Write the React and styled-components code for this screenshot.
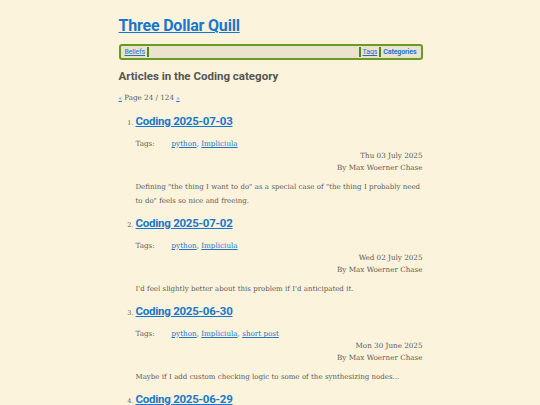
import styled, { createGlobalStyle } from 'styled-components';

const GlobalStyle = createGlobalStyle`
    html, body {
        margin: 0;
        padding: 0;
        background: #fcf3dc;
    }
    body {
        font-family: "DejaVu Serif", serif;
        color: #5a5a5a;
    }
`;

const Page = styled.div`
    width: 304px;
    margin: 0 auto;
    padding-top: 16px;
    padding-left: 1px;
`;

const SiteTitle = styled.h1`
    margin: 0;
    font-family: "Roboto", sans-serif;
    font-size: 16px;
    font-weight: 700;
    line-height: 20px;
    letter-spacing: -0.2px;

    a {
        color: #1a76cc;
    }
`;

const Nav = styled.nav`
    display: flex;
    align-items: center;
    margin-top: 8px;
    height: 12px;
    border: 2px solid #6a9a22;
    border-radius: 3px;
    background: #ebe3cf;
    padding: 0 2px;
    font-family: "Roboto", sans-serif;
    font-size: 7px;
    letter-spacing: -0.1px;
`;

const NavLink = styled.a`
    color: #1a76cc;
    font-weight: ${props => props.$current ? 700 : 400};
    text-decoration: ${props => props.$current ? 'none' : 'underline'};
    padding: 0 2px;
`;

const Sep = styled.span`
    width: 2px;
    height: 10px;
    background: #4e8a14;
`;

const Spacer = styled.div`
    flex: 1;
`;

const Heading = styled.h2`
    margin: 9px 0 0;
    font-family: "Roboto", sans-serif;
    font-size: 11.5px;
    font-weight: 700;
    color: #555;
    line-height: 14px;
`;

const Pager = styled.div`
    margin-top: 10px;
    font-size: 7.2px;
    line-height: 10px;
    color: #5a5a5a;

    a {
        color: #1a76cc;
        font-size: 5.5px;
    }
`;

const List = styled.ol`
    margin: 10px 0 0;
    padding-left: 17px;
    font-size: 6.5px;

    li::marker {
        color: #5a5a5a;
    }
`;

const Item = styled.li`
    margin-bottom: 7px;
`;

const Title = styled.h3`
    margin: 0;
    font-family: "Roboto", sans-serif;
    font-size: 11.5px;
    font-weight: 700;
    line-height: 16px;
    letter-spacing: -0.25px;

    a {
        color: #1a76cc;
    }
`;

const TagRow = styled.div`
    display: flex;
    margin-top: 9px;
    font-size: 7.2px;
    line-height: 12px;
`;

const TagLabel = styled.span`
    width: 36px;
`;

const TagLink = styled.a`
    color: #1a76cc;
`;

const Meta = styled.div`
    text-align: right;
    font-size: 7.2px;
    line-height: 12px;
`;

const Summary = styled.p`
    margin: 6px 0 0;
    font-size: 7px;
    word-spacing: 0.15px;
    line-height: 14px;
`;

const articles = [
    {
        title: 'Coding 2025-07-03',
        tags: ['python', 'Impliciula'],
        date: 'Thu 03 July 2025',
        summary: 'Defining "the thing I want to do" as a special case of "the thing I probably need to do" feels so nice and freeing.',
    },
    {
        title: 'Coding 2025-07-02',
        tags: ['python', 'Impliciula'],
        date: 'Wed 02 July 2025',
        summary: "I'd feel slightly better about this problem if I'd anticipated it.",
    },
    {
        title: 'Coding 2025-06-30',
        tags: ['python', 'Impliciula', 'short post'],
        date: 'Mon 30 June 2025',
        summary: 'Maybe if I add custom checking logic to some of the synthesizing nodes...',
    },
    {
        title: 'Coding 2025-06-29',
        tags: ['python', 'Impliciula'],
        date: 'Sun 29 June 2025',
        summary: '',
    },
];

function App() {
    return (
        <>
            <GlobalStyle />
            <Page>
                <SiteTitle><a href="#">Three Dollar Quill</a></SiteTitle>
                <Nav>
                    <NavLink href="#">Beliefs</NavLink>
                    <Sep />
                    <Spacer />
                    <Sep />
                    <NavLink href="#">Tags</NavLink>
                    <Sep />
                    <NavLink href="#" $current>Categories</NavLink>
                </Nav>
                <Heading>Articles in the Coding category</Heading>
                <Pager><a href="#">«</a> Page 24 / 124 <a href="#">»</a></Pager>
                <List>
                    {articles.map((article, index) => (
                        <Item key={index}>
                            <Title><a href="#">{article.title}</a></Title>
                            <TagRow>
                                <TagLabel>Tags:</TagLabel>
                                <span>
                                    {article.tags.map((tag, i) => (
                                        <span key={tag}>
                                            <TagLink href="#">{tag}</TagLink>
                                            {i < article.tags.length - 1 ? ', ' : ''}
                                        </span>
                                    ))}
                                </span>
                            </TagRow>
                            <Meta>{article.date}</Meta>
                            <Meta>By Max Woerner Chase</Meta>
                            <Summary>{article.summary}</Summary>
                        </Item>
                    ))}
                </List>
            </Page>
        </>
    );
}

export default App;
